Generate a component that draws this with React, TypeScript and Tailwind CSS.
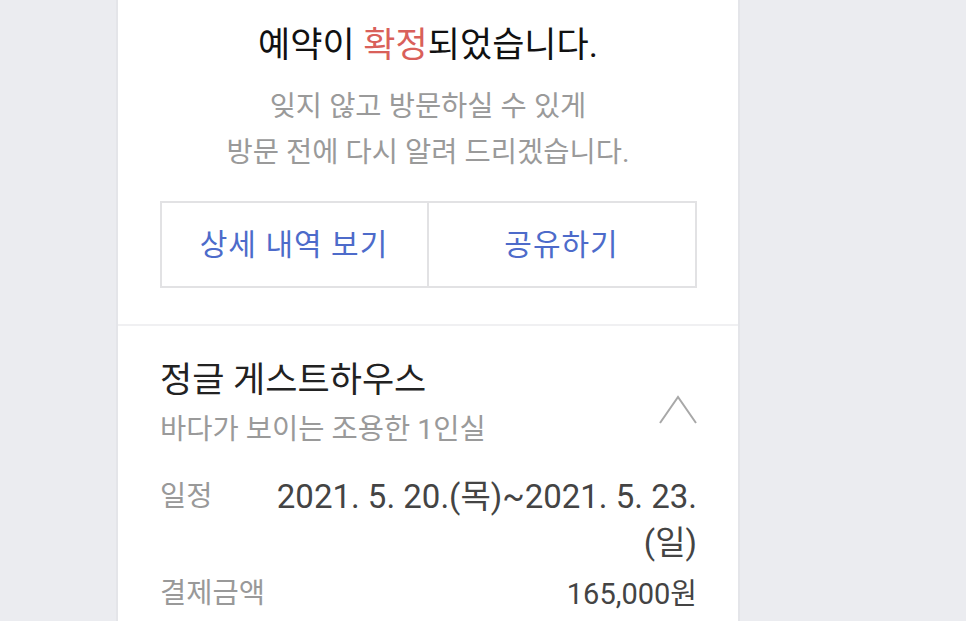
import React from "react";

const font = { fontFamily: 'Roboto, "Noto Sans CJK KR", "Noto Sans", sans-serif' };

export default function App() {
  return (
    <div className="min-h-[621px] w-full bg-[#ebecf0] overflow-hidden" style={font}>
      <div className="ml-[116px] w-[624px] min-h-[621px] bg-white border-x-2 border-[#e4e5e9]">
        {/* Top section */}
        <div className="flex flex-col items-center pt-[22px] pb-[36px] border-b-2 border-[#f0f0f2]">
          <h1 className="text-[35px] leading-[48px] text-[#111111] font-normal">
            예약이 <span className="text-[#d9605a]">확정</span>되었습니다.
          </h1>
          <div className="mt-[14px] text-center text-[28.5px] leading-[46px] text-[#9a9a9a]">
            <p>잊지 않고 방문하실 수 있게</p>
            <p>방문 전에 다시 알려 드리겠습니다.</p>
          </div>
          <div className="mt-[25px] w-[537px] h-[87px] grid grid-cols-[267px_1fr] border-2 border-[#e2e2e4]">
            <button className="flex items-center justify-center border-r-2 border-[#e2e2e4] text-[30px] text-[#4d6bca] tracking-[1px]">
              상세 내역 보기
            </button>
            <button className="flex items-center justify-center text-[30px] text-[#4d6bca] tracking-[1px]">
              공유하기
            </button>
          </div>
        </div>

        {/* Detail section */}
        <div className="pl-[42px] pr-[41px] pt-[33px]">
          <div className="flex items-center justify-between">
            <div className="flex flex-col gap-[7px]">
              <div className="text-[35px] leading-[44px] text-[#222222]">정글 게스트하우스</div>
              <div className="text-[28.5px] leading-[40px] text-[#9a9a9a]">바다가 보이는 조용한 1인실</div>
            </div>
            <svg width="40" height="32" viewBox="0 0 40 32" className="mt-[10px] mr-[-1px]" fill="none">
              <path d="M2 29 L20 3 L38 29" stroke="#a8a8a8" strokeWidth="2" />
            </svg>
          </div>

          <div className="mt-[24px] flex flex-col gap-[5px]">
            <div className="flex justify-between">
              <span className="text-[28.5px] leading-[46px] text-[#999999]">일정</span>
              <div className="text-right text-[33px] leading-[46px] text-[#444444]">
                <div className="whitespace-nowrap">2021. 5. 20.(목)~2021. 5. 23.</div>
                <div>(일)</div>
              </div>
            </div>
            <div className="flex justify-between">
              <span className="text-[28.5px] leading-[46px] text-[#999999]">결제금액</span>
              <span className="text-[29px] leading-[46px] text-[#444444]">165,000원</span>
            </div>
          </div>
        </div>
      </div>
    </div>
  );
}
